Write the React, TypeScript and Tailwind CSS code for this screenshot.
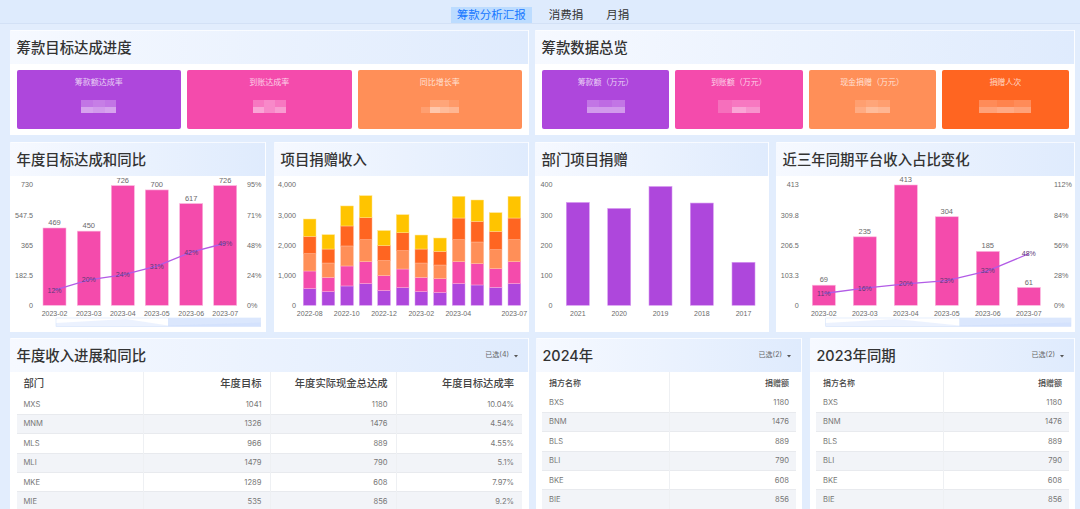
const chartFont = 'Liberation Sans, Arial, sans-serif'
const BASE = 305.3
const TOP = 185

const y = (v: number, max: number) => BASE - (v / max) * (BASE - TOP)

type PanelProps = {
  title: string
  className: string
  selected?: number
  children: React.ReactNode
}

function Panel({ title, className, selected, children }: PanelProps) {
  return (
    <section className={`bg-white flex flex-col overflow-hidden ${className}`}>
      <header className="h-[34px] shrink-0 flex items-center justify-between pl-[5.5px] pr-[9px] border border-b-0 border-white/70 bg-gradient-to-r from-[#f6f9ff] to-[#dfebfd]">
        <h2 className="text-[14.4px] font-medium text-[#333]">{title}</h2>
        {selected && (
          <span className="flex items-center gap-[3px] text-[7px] text-[#666]">
            已选({selected})
            <svg width="6" height="4" viewBox="0 0 6 4" className="ml-[1px]">
              <path d="M1 1h4L3 3.4z" fill="#555" />
            </svg>
          </span>
        )}
      </header>
      {children}
    </section>
  )
}

type Block = { w: string; cells: string[] }

function StatCard({ label, bg, blocks }: { label: string; bg: string; blocks: Block[] }) {
  return (
    <div className={`flex-1 h-[59px] rounded-[2px] flex flex-col items-center pt-[8px] ${bg}`}>
      <span className="text-[8px] leading-[9px] text-white/75">{label}</span>
      <div className="mt-[13px] flex flex-col">
        {blocks.map((b, i) => (
          <div key={i} className={`flex h-[6.5px] ${b.w}`}>
            {b.cells.map((c, j) => (
              <span key={j} className={`flex-1 ${c}`} />
            ))}
          </div>
        ))}
      </div>
    </div>
  )
}

function Axis({ labels, x, anchor }: { labels: string[]; x: number; anchor: 'start' | 'end' }) {
  return (
    <>
      {labels.map((l, i) => (
        <text key={l} x={x} y={BASE - i * 30.08 + 2.5} textAnchor={anchor} fontSize="7.2" fill="#6b6b6b">
          {l}
        </text>
      ))}
    </>
  )
}

function Slider({ x, split, end }: { x: number; split: number; end: number }) {
  return (
    <g>
      <rect x={x} y="318" width={end - x} height="8.5" fill="#fff" stroke="#d5e3fb" strokeWidth="0.6" />
      <rect x={split} y="318" width={end - split} height="8.5" fill="#dbe7fd" />
      <path d={`M${x} 323 L${x + 70} 319 L${split} 325.5 L${end} 322.5 V326.5 H${x} Z`} fill="#c9dbfb" opacity="0.35" />
    </g>
  )
}

type ComboProps = {
  box: string
  max: number
  pctMax: number
  values: number[]
  pcts: number[]
  bars: number[]
  barW: number
  leftAxis: string[]
  leftX: number
  rightAxis: string[]
  rightX: number
  months: string[]
  slider: { x: number; split: number; end: number }
}

function ComboChart({ box, max, pctMax, values, pcts, bars, barW, leftAxis, leftX, rightAxis, rightX, months, slider }: ComboProps) {
  const pts = pcts.map((p, i) => [bars[i] + barW / 2, y(p, pctMax)])
  return (
    <svg viewBox={box} className="w-full flex-1 block" style={{ fontFamily: chartFont }}>
      <Axis labels={leftAxis} x={leftX} anchor="end" />
      <Axis labels={rightAxis} x={rightX} anchor="start" />
      {values.map((v, i) => (
        <g key={months[i]}>
          <rect x={bars[i]} y={y(v, max)} width={barW} height={BASE - y(v, max)} fill="#f44bac" stroke="#fbb3dc" strokeWidth="0.6" />
          <text x={bars[i] + barW / 2} y={y(v, max) - 3} textAnchor="middle" fontSize="7.5" fill="#6b6b6b">
            {v}
          </text>
          <text x={bars[i] + barW / 2} y="316" textAnchor="middle" fontSize="7" fill="#6b6b6b">
            {months[i]}
          </text>
        </g>
      ))}
      <polyline points={pts.map((p) => p.join(',')).join(' ')} fill="none" stroke="#b25be6" strokeWidth="1.3" />
      {pts.map(([px, py], i) => (
        <text key={i} x={px} y={py + 2.5} textAnchor="middle" fontSize="7" fill="#5b3a78">
          {pcts[i]}%
        </text>
      ))}
      <Slider {...slider} />
    </svg>
  )
}

const stackColors = ['#ae47dc', '#f44bac', '#ff8f58', '#ff6521', '#ffc400']
const stackStroke = ['#d79af0', '#fbb3dc', '#ffc3a5', '#ffb08c', '#ffe48a']
const stacks = [
  [554, 587, 576, 576, 576],
  [454, 476, 476, 465, 476],
  [643, 665, 665, 665, 665],
  [720, 731, 731, 731, 731],
  [488, 499, 499, 499, 499],
  [587, 620, 609, 598, 598],
  [454, 476, 476, 465, 465],
  [421, 465, 454, 454, 443],
  [720, 731, 731, 720, 720],
  [676, 709, 720, 687, 709],
  [598, 620, 632, 609, 620],
  [720, 731, 731, 720, 720],
]
const stackX = [303.3, 322, 340.7, 359.3, 377.7, 396.3, 415, 433.7, 452.3, 471, 489.3, 508]
const stackTicks: [string, number][] = [
  ['2022-08', 309.7],
  ['2022-10', 346.7],
  ['2022-12', 384],
  ['2023-02', 421.3],
  ['2023-04', 458.3],
  ['2023-07', 514.3],
]

function StackChart() {
  return (
    <svg viewBox="274 176 255 156" className="w-full flex-1 block" style={{ fontFamily: chartFont }}>
      <Axis labels={['0', '1,000', '2,000', '3,000', '4,000']} x={296} anchor="end" />
      {stacks.map((row, i) => {
        let sum = 0
        return row.map((v, j) => {
          const top = y(sum + v, 4000)
          const h = (v / 4000) * (BASE - TOP)
          sum += v
          return <rect key={`${i}-${j}`} x={stackX[i]} y={top} width="12.7" height={h} fill={stackColors[j]} stroke={stackStroke[j]} strokeWidth="0.5" />
        })
      })}
      {stackTicks.map(([t, x]) => (
        <text key={t} x={x} y="316" textAnchor="middle" fontSize="7" fill="#6b6b6b">
          {t}
        </text>
      ))}
    </svg>
  )
}

const deptYears: [string, number, number][] = [
  ['2021', 342, 566.3],
  ['2020', 322, 607.7],
  ['2019', 395, 649],
  ['2018', 340, 690.3],
  ['2017', 143, 732],
]

function DeptChart() {
  return (
    <svg viewBox="535 176 234 156" className="w-full flex-1 block" style={{ fontFamily: chartFont }}>
      <Axis labels={['0', '100', '200', '300', '400']} x={552.5} anchor="end" />
      {deptYears.map(([label, v, x]) => (
        <g key={label}>
          <rect x={x} y={y(v, 400)} width="23" height={BASE - y(v, 400)} fill="#ae47dc" stroke="#d79af0" strokeWidth="0.6" />
          <text x={x + 11.5} y="316" textAnchor="middle" fontSize="7" fill="#6b6b6b">
            {label}
          </text>
        </g>
      ))}
    </svg>
  )
}

const months = ['2023-02', '2023-03', '2023-04', '2023-05', '2023-06', '2023-07']

const deptRows = [
  ['MXS', '1041', '1180', '10.04%'],
  ['MNM', '1326', '1476', '4.54%'],
  ['MLS', '966', '889', '4.55%'],
  ['MLI', '1479', '790', '5.1%'],
  ['MKE', '1289', '608', '7.97%'],
  ['MIE', '535', '856', '9.2%'],
]

const donorRows = [
  ['BXS', '1180'],
  ['BNM', '1476'],
  ['BLS', '889'],
  ['BLI', '790'],
  ['BKE', '608'],
  ['BIE', '856'],
]

function DeptTable() {
  return (
    <div className="pl-[6.5px] pr-[7px]">
      <table className="w-full table-fixed border-collapse">
        <colgroup>
          <col className="w-[126.5px]" />
          <col className="w-[127px]" />
          <col className="w-[126px]" />
          <col />
        </colgroup>
        <thead>
          <tr className="h-[23px] text-[10.3px] font-medium text-[#444]">
            <th className="text-left font-medium pl-[7px] border-r border-[#eef0f3]">部门</th>
            <th className="text-right font-medium pr-[8px] border-r border-[#eef0f3]">年度目标</th>
            <th className="text-right font-medium pr-[8px] border-r border-[#eef0f3]">年度实际现金总达成</th>
            <th className="text-right font-medium pr-[8px]">年度目标达成率</th>
          </tr>
        </thead>
        <tbody>
          {deptRows.map((r, i) => (
            <tr key={r[0]} className={`h-[19.4px] text-[7.6px] text-[#777] border-b border-[#e8eaee] ${i % 2 ? 'bg-[#f2f4f8]' : 'bg-white'}`}>
              <td className="pl-[7px] border-r border-[#eef0f3]">{r[0]}</td>
              <td className="text-right pr-[8px] border-r border-[#eef0f3]">{r[1]}</td>
              <td className="text-right pr-[8px] border-r border-[#eef0f3]">{r[2]}</td>
              <td className="text-right pr-[8px]">{r[3]}</td>
            </tr>
          ))}
        </tbody>
      </table>
    </div>
  )
}

function DonorTable() {
  return (
    <div className="px-[6px]">
      <table className="w-full table-fixed border-collapse">
        <colgroup>
          <col className="w-[127px]" />
          <col />
        </colgroup>
        <thead>
          <tr className="h-[21px] text-[8px] text-[#444]">
            <th className="text-left font-medium pl-[7px] border-r border-[#eef0f3]">捐方名称</th>
            <th className="text-right font-medium pr-[7px]">捐赠额</th>
          </tr>
        </thead>
        <tbody>
          {donorRows.map((r, i) => (
            <tr key={r[0]} className={`h-[19.4px] text-[7.6px] text-[#777] border-b border-[#e8eaee] ${i % 2 ? 'bg-[#f2f4f8]' : 'bg-white'}`}>
              <td className="pl-[7px] border-r border-[#eef0f3]">{r[0]}</td>
              <td className="text-right pr-[7px]">{r[1]}</td>
            </tr>
          ))}
        </tbody>
      </table>
    </div>
  )
}

export default function App() {
  return (
    <div className="w-[1080px] h-[509px] overflow-hidden flex flex-col bg-[#e2edfd] font-['Inter','Noto_Sans_CJK_SC',sans-serif]">
      {/* Tabs */}
      <nav className="h-[24px] shrink-0 flex items-end justify-center gap-[11px] pl-[6px] border-b border-[#d3e1f6] bg-[#deebfd] text-[11.5px] leading-[16px] text-[#333]">
        <span className="px-[6px] bg-[#bcdcff] text-[#1677ff]">筹款分析汇报</span>
        <span className="px-[6px]">消费捐</span>
        <span className="px-[6px]">月捐</span>
      </nav>

      <main className="flex-1 flex flex-col gap-[7px] pl-[10px] pr-[5px] pt-[6px] min-h-0">
        {/* KPI row */}
        <div className="flex gap-[6px] h-[105px] shrink-0">
          <Panel title="筹款目标达成进度" className="w-[519px]">
            <div className="flex gap-[6px] pt-[6px] pl-[6.5px] pr-[7px]">
              <StatCard
                label="筹款额达成率"
                bg="bg-[#ae47dc]"
                blocks={[
                  { w: 'w-[35px]', cells: ['bg-white/25', 'bg-white/30', 'bg-white/25'] },
                  { w: 'w-[35px]', cells: ['bg-white/50', 'bg-white/45', 'bg-white/50'] },
                ]}
              />
              <StatCard
                label="到账达成率"
                bg="bg-[#f44bac]"
                blocks={[
                  { w: 'w-[33px]', cells: ['bg-white/25', 'bg-white/35', 'bg-white/25'] },
                  { w: 'w-[33px]', cells: ['bg-white/50', 'bg-white/35', 'bg-white/45'] },
                ]}
              />
              <StatCard
                label="同比增长率"
                bg="bg-[#ff8f58]"
                blocks={[
                  { w: 'w-[38px]', cells: ['bg-transparent', 'bg-white/20', 'bg-white/20', 'bg-white/10'] },
                  { w: 'w-[38px]', cells: ['bg-white/15', 'bg-white/50', 'bg-white/40', 'bg-white/35'] },
                ]}
              />
            </div>
          </Panel>
          <Panel title="筹款数据总览" className="w-[540px]">
            <div className="flex gap-[6px] pt-[6px] pl-[7px] pr-[6px]">
              <StatCard
                label="筹款额（万元）"
                bg="bg-[#ae47dc]"
                blocks={[
                  { w: 'w-[38px]', cells: ['bg-white/25', 'bg-white/20', 'bg-white/25'] },
                  { w: 'w-[38px]', cells: ['bg-white/45', 'bg-white/45', 'bg-white/45'] },
                ]}
              />
              <StatCard
                label="到账额（万元）"
                bg="bg-[#f44bac]"
                blocks={[
                  { w: 'w-[42px]', cells: ['bg-white/20', 'bg-white/25', 'bg-white/25'] },
                  { w: 'w-[42px]', cells: ['bg-white/20', 'bg-white/50', 'bg-white/40'] },
                ]}
              />
              <StatCard
                label="现金捐赠（万元）"
                bg="bg-[#ff8f58]"
                blocks={[
                  { w: 'w-[35px]', cells: ['bg-white/15', 'bg-white/20', 'bg-white/15'] },
                  { w: 'w-[35px]', cells: ['bg-white/25', 'bg-white/40', 'bg-white/35'] },
                ]}
              />
              <StatCard
                label="捐赠人次"
                bg="bg-[#ff6521]"
                blocks={[
                  { w: 'w-[52px]', cells: ['bg-white/25', 'bg-white/20', 'bg-white/25'] },
                  { w: 'w-[52px]', cells: ['bg-white/40', 'bg-white/45', 'bg-white/40'] },
                ]}
              />
            </div>
          </Panel>
        </div>

        {/* Charts row */}
        <div className="flex h-[190px] shrink-0">
          <Panel title="年度目标达成和同比" className="w-[256px] mr-[8px]">
            <ComboChart
              box="10 176 256 156"
              max={730}
              pctMax={95}
              values={[469, 450, 726, 700, 617, 726]}
              pcts={[12, 20, 24, 31, 42, 49]}
              bars={[43, 77.3, 111.3, 145.3, 179.7, 213.7]}
              barW={23}
              leftAxis={['0', '182.5', '365', '547.5', '730']}
              leftX={33}
              rightAxis={['0%', '24%', '48%', '71%', '95%']}
              rightX={247}
              months={months}
              slider={{ x: 56, split: 168, end: 260.7 }}
            />
          </Panel>
          <Panel title="项目捐赠收入" className="w-[255px] mr-[6px]">
            <StackChart />
          </Panel>
          <Panel title="部门项目捐赠" className="w-[234px] mr-[7px]">
            <DeptChart />
          </Panel>
          <Panel title="近三年同期平台收入占比变化" className="w-[299px]">
            <ComboChart
              box="776 176 299 156"
              max={413}
              pctMax={112}
              values={[69, 235, 413, 304, 185, 61]}
              pcts={[11, 16, 20, 23, 32, 48]}
              bars={[812.3, 853.3, 894.3, 935.3, 976.3, 1017.3]}
              barW={23}
              leftAxis={['0', '103.3', '206.5', '309.8', '413']}
              leftX={798.7}
              rightAxis={['0%', '28%', '56%', '84%', '112%']}
              rightX={1054}
              months={months}
              slider={{ x: 825.7, split: 959.3, end: 1071 }}
            />
          </Panel>
        </div>

        {/* Tables row */}
        <div className="flex flex-1 min-h-0 -mt-[1px]">
          <Panel title="年度收入进展和同比" selected={4} className="w-[519px] mr-[7px]">
            <DeptTable />
          </Panel>
          <Panel title="2024年" selected={2} className="w-[266px] mr-[8px]">
            <DonorTable />
          </Panel>
          <Panel title="2023年同期" selected={2} className="w-[265px]">
            <DonorTable />
          </Panel>
        </div>
      </main>
    </div>
  )
}
